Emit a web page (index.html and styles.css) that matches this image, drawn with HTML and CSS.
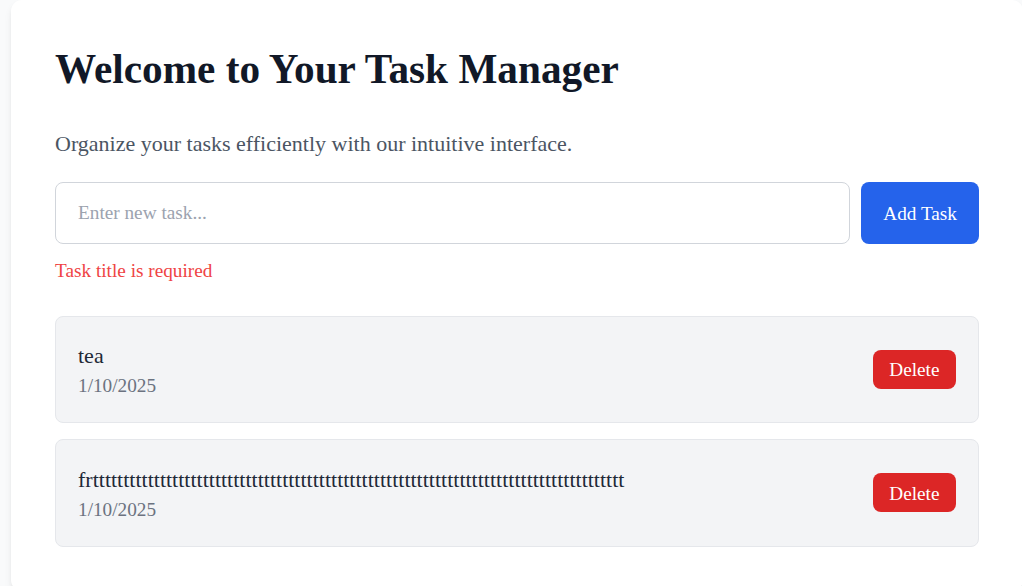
FILE: index.html
```html
<!DOCTYPE html>
<html lang="en">
<head>
<meta charset="utf-8">
<title>Task Manager</title>
<link rel="stylesheet" href="styles.css">
</head>
<body>
<div class="page">
  <main class="card">
    <h1 class="title">Welcome to Your Task Manager</h1>
    <p class="intro">Organize your tasks efficiently with our intuitive interface.</p>
    <form class="add-form">
      <input class="task-input" type="text" placeholder="Enter new task...">
      <button class="add-btn" type="button">Add Task</button>
    </form>
    <p class="error">Task title is required</p>
    <ul class="task-list">
      <li class="task">
        <div class="task-info">
          <div class="task-title">tea</div>
          <div class="task-date">1/10/2025</div>
        </div>
        <button class="delete-btn" type="button">Delete</button>
      </li>
      <li class="task">
        <div class="task-info">
          <div class="task-title">frttttttttttttttttttttttttttttttttttttttttttttttttttttttttttttttttttttttttttttttttttttttt</div>
          <div class="task-date">1/10/2025</div>
        </div>
        <button class="delete-btn" type="button">Delete</button>
      </li>
    </ul>
  </main>
</div>
</body>
</html>
```
FILE: styles.css
```css
html, body {
  margin: 0;
  padding: 0;
  background: #f9fafb;
  overflow: hidden;
  font-family: "Liberation Serif", "Times New Roman", serif;
}

.page {
  padding-left: 11px;
}

.card {
  width: 1012px;
  box-sizing: border-box;
  background: #ffffff;
  border-radius: 11px;
  padding: 45px 44px 44px;
  box-shadow: 0 5px 8px -1px rgba(0, 0, 0, 0.08), 0 2px 5px -2px rgba(0, 0, 0, 0.08);
}

.title {
  margin: 0 0 32px;
  font-size: 41.25px;
  line-height: 49.5px;
  font-weight: bold;
  color: #111827;
}

.intro {
  margin: 0 0 22px;
  font-size: 22px;
  line-height: 33px;
  color: #4b5563;
}

.add-form {
  display: flex;
  gap: 11px;
  margin: 0;
}

.task-input {
  flex: 1;
  margin: 0;
  border: 1px solid #d1d5db;
  border-radius: 8px;
  padding: 16.5px 22px;
  font-family: inherit;
  font-size: 19.25px;
  line-height: 27.5px;
  color: #111827;
  outline: none;
}

.task-input::placeholder {
  color: #9ca3af;
}

.add-btn {
  margin: 0;
  border: none;
  border-radius: 8px;
  padding: 2px 22px 0;
  background: #2563eb;
  color: #ffffff;
  font-family: inherit;
  font-size: 19.25px;
  line-height: 27.5px;
}

.error {
  margin: 12.5px 0 0;
  font-size: 19.25px;
  line-height: 27.5px;
  color: #ef4444;
}

.task-list {
  list-style: none;
  margin: 31.5px 0 0;
  padding: 0;
  display: flex;
  flex-direction: column;
  gap: 16px;
}

.task {
  display: flex;
  align-items: center;
  justify-content: space-between;
  padding: 22.5px 22px;
  background: #f3f4f6;
  border: 1px solid #e5e7eb;
  border-radius: 8px;
}

.task-title {
  font-size: 22px;
  line-height: 33px;
  color: #1f2937;
}

.task-date {
  font-size: 19.25px;
  line-height: 27.5px;
  color: #6b7280;
}

.delete-btn {
  margin: 0;
  border: none;
  border-radius: 8px;
  padding: 6.5px 16.5px 5px;
  background: #dc2626;
  color: #ffffff;
  font-family: inherit;
  font-size: 19.25px;
  line-height: 27.5px;
}
```
